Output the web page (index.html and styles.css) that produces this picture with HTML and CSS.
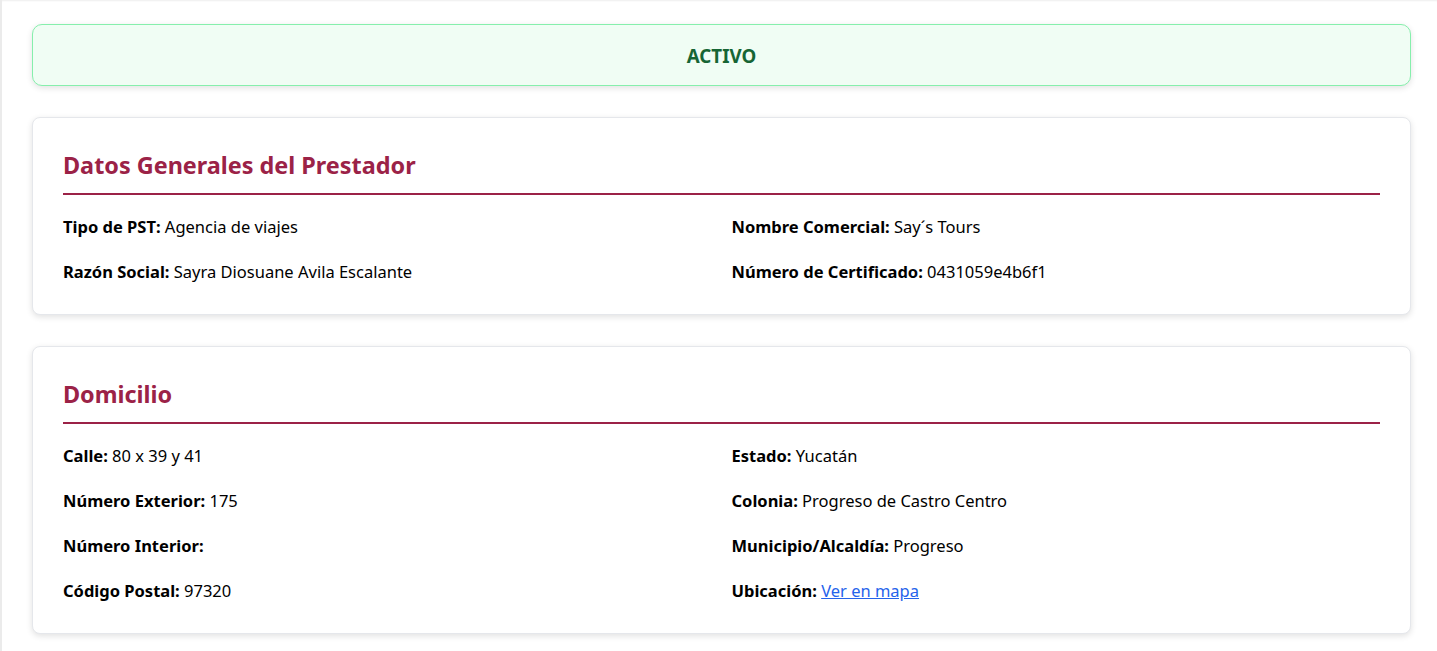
FILE: index.html
```html
<!DOCTYPE html>
<html lang="es">
<head>
<meta charset="utf-8">
<title>Prestador de Servicios Turísticos</title>
<link rel="stylesheet" href="styles.css">
</head>
<body>
<main class="page">
  <div class="status">ACTIVO</div>

  <section class="card">
    <h2 class="card-title">Datos Generales del Prestador</h2>
    <div class="fields">
      <p class="field"><strong>Tipo de PST:</strong> Agencia de viajes</p>
      <p class="field"><strong>Nombre Comercial:</strong> Say´s Tours</p>
      <p class="field"><strong>Razón Social:</strong> Sayra Diosuane Avila Escalante</p>
      <p class="field"><strong>Número de Certificado:</strong> 0431059e4b6f1</p>
    </div>
  </section>

  <section class="card">
    <h2 class="card-title">Domicilio</h2>
    <div class="fields">
      <p class="field"><strong>Calle:</strong> 80 x 39 y 41</p>
      <p class="field"><strong>Estado:</strong> Yucatán</p>
      <p class="field"><strong>Número Exterior:</strong> 175</p>
      <p class="field"><strong>Colonia:</strong> Progreso de Castro Centro</p>
      <p class="field"><strong>Número Interior:</strong> </p>
      <p class="field"><strong>Municipio/Alcaldía:</strong> Progreso</p>
      <p class="field"><strong>Código Postal:</strong> 97320</p>
      <p class="field"><strong>Ubicación:</strong> <a href="#" class="link">Ver en mapa</a></p>
    </div>
  </section>
</main>
</body>
</html>
```

FILE: styles.css
```css
html, body {
  margin: 0;
  padding: 0;
  background: #ffffff;
}

body {
  font-family: "Segoe UI", "Noto Sans", "Open Sans", sans-serif;
  color: #000000;
  font-size: 16.5px;
  line-height: 24px;
}

.page {
  min-height: 100vh;
  box-sizing: border-box;
  border-left: 2px solid #ebebeb;
  box-shadow: inset 0 2px 2px -1px rgba(0, 0, 0, 0.07);
  padding: 24px 26px 24px 30px;
  display: flex;
  flex-direction: column;
  gap: 31px;
}

.status {
  background: #f0fdf4;
  border: 1px solid #86efac;
  border-radius: 10px;
  box-shadow: 0 2px 6px rgba(0, 0, 0, 0.12);
  color: #166534;
  font-weight: 700;
  font-size: 18.7px;
  line-height: 24px;
  text-align: center;
  padding: 19px 16px 17px;
}

.card {
  background: #ffffff;
  border: 1px solid #e5e7eb;
  border-radius: 8px;
  box-shadow: 0 2px 6px rgba(0, 0, 0, 0.12);
  padding: 30px;
}

.card-title {
  margin: 0 0 20px;
  padding-bottom: 10px;
  border-bottom: 2px solid #9b2247;
  color: #9b2247;
  font-size: 23.4px;
  line-height: 35px;
  font-weight: 700;
}

.fields {
  display: grid;
  grid-template-columns: 1fr 1fr;
  column-gap: 20px;
  row-gap: 21px;
}

.field {
  margin: 0;
  font-size: 16.5px;
  line-height: 24px;
}

.field strong {
  font-weight: 700;
}

.link {
  color: #2563eb;
  text-decoration: underline;
}
```
